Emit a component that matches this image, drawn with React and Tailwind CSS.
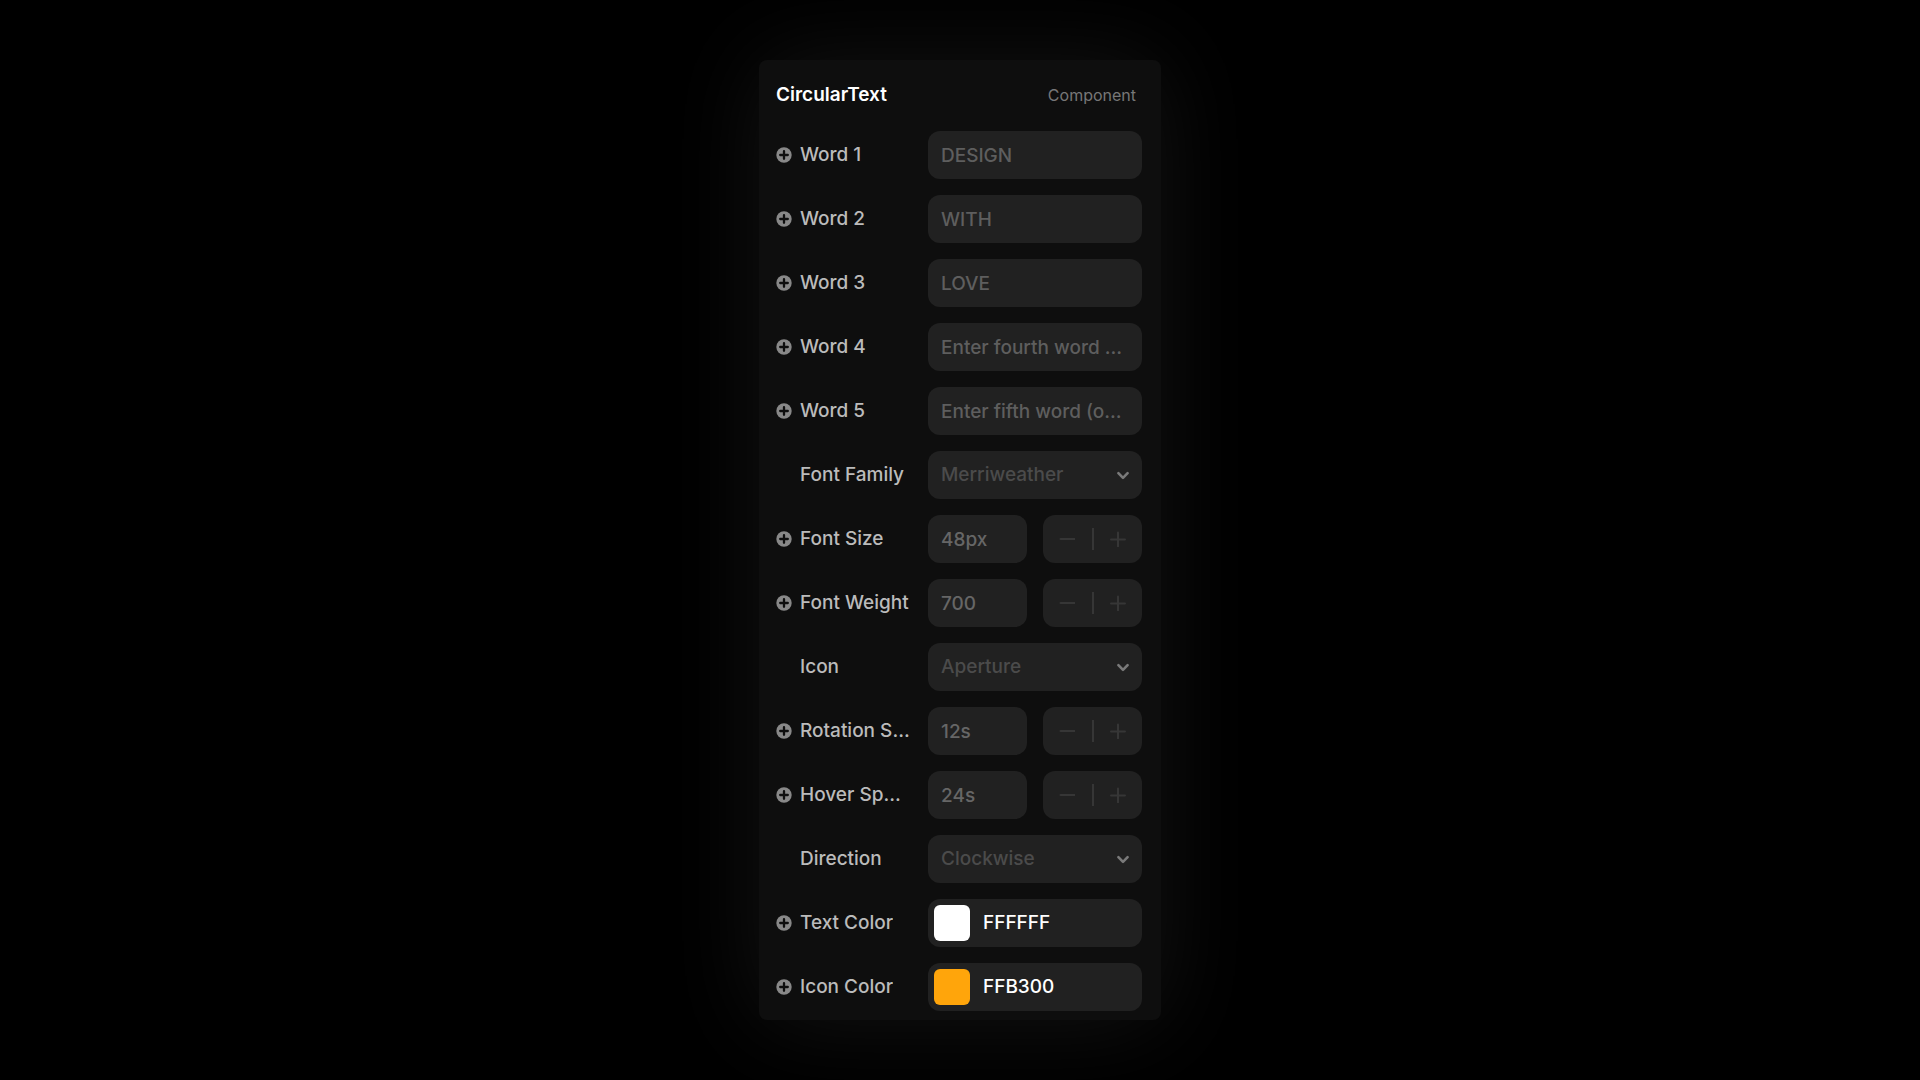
import React, { useState } from "react";

const fields = [
  { id: "word1", label: "Word 1", type: "text", placeholder: "DESIGN" },
  { id: "word2", label: "Word 2", type: "text", placeholder: "WITH" },
  { id: "word3", label: "Word 3", type: "text", placeholder: "LOVE" },
  { id: "word4", label: "Word 4", type: "text", placeholder: "Enter fourth word (optional)" },
  { id: "word5", label: "Word 5", type: "text", placeholder: "Enter fifth word (optional)" },
  { id: "fontFamily", label: "Font Family", type: "select", options: ["Merriweather", "Inter", "Roboto"] },
  { id: "fontSize", label: "Font Size", type: "number", value: 48, unit: "px" },
  { id: "fontWeight", label: "Font Weight", type: "number", value: 700, unit: "", step: 100 },
  { id: "icon", label: "Icon", type: "select", options: ["Aperture", "Star", "Heart"] },
  { id: "rotationSpeed", label: "Rotation Speed", type: "number", value: 12, unit: "s" },
  { id: "hoverSpeed", label: "Hover Speed", type: "number", value: 24, unit: "s" },
  { id: "direction", label: "Direction", type: "select", options: ["Clockwise", "Counterclockwise"] },
  { id: "textColor", label: "Text Color", type: "color", value: "FFFFFF", swatch: "bg-white" },
  { id: "iconColor", label: "Icon Color", type: "color", value: "FFB300", swatch: "bg-[#ffa50b]" },
];

function PlusBadge() {
  return (
    <svg viewBox="0 0 16 16" className="w-4 h-4" aria-hidden="true">
      <circle cx="8" cy="8" r="7.7" fill="#888888" />
      <path d="M8 4.2v7.6M4.2 8h7.6" stroke="#0e0e0e" strokeWidth="2.3" strokeLinecap="round" />
    </svg>
  );
}

function TextField({ field }) {
  return (
    <input
      id={field.id}
      type="text"
      placeholder={field.placeholder}
      className="w-full h-12 rounded-xl bg-[#212121] pl-[13px] pr-[18px] text-white placeholder:text-[#5e5e5e] text-ellipsis outline-none"
    />
  );
}

function SelectField({ field }) {
  return (
    <div className="relative w-full">
      <select
        id={field.id}
        className="appearance-none w-full h-12 rounded-xl bg-[#212121] pl-[13px] pr-10 text-[#4b4b4b] outline-none"
      >
        {field.options.map((option) => (
          <option key={option}>{option}</option>
        ))}
      </select>
      <svg
        viewBox="0 0 14 10"
        className="absolute right-3 top-5 w-[14px] h-[10px] pointer-events-none"
        fill="none"
        stroke="#7a7a7a"
        strokeWidth="2.6"
        strokeLinecap="round"
        strokeLinejoin="round"
      >
        <path d="M2.4 2.2 7 6.8l4.6-4.6" />
      </svg>
    </div>
  );
}

function NumberField({ field }) {
  const [value, setValue] = useState(field.value);
  const step = field.step || 1;

  return (
    <div className="grid grid-cols-2 gap-4 w-full">
      <input
        id={field.id}
        type="text"
        value={value + field.unit}
        onChange={(e) => setValue(parseInt(e.target.value) || 0)}
        className="w-full min-w-0 h-12 rounded-xl bg-[#212121] px-[13px] text-[#666666] outline-none"
      />
      <div className="flex items-center h-12 rounded-xl bg-[#212121] text-[#363636]">
        <button
          type="button"
          aria-label={"Decrease " + field.label}
          onClick={() => setValue(value - step)}
          className="flex-1 h-full flex items-center justify-center"
        >
          <svg viewBox="0 0 16 16" className="w-4 h-4" stroke="currentColor" strokeWidth="2" strokeLinecap="round">
            <path d="M1.5 8h14" />
          </svg>
        </button>
        <span className="w-[2px] h-[22px] bg-[#363636]" />
        <button
          type="button"
          aria-label={"Increase " + field.label}
          onClick={() => setValue(value + step)}
          className="flex-1 h-full flex items-center justify-center"
        >
          <svg viewBox="0 0 16 16" className="w-4 h-4" stroke="currentColor" strokeWidth="2" strokeLinecap="round">
            <path d="M1 8.5h14M8 1.5v14" />
          </svg>
        </button>
      </div>
    </div>
  );
}

function ColorField({ field }) {
  return (
    <div className="flex items-center gap-[13px] w-full h-12 rounded-xl bg-[#212121] px-[6px]">
      <button
        type="button"
        aria-label={"Pick " + field.label}
        className={"w-9 h-9 shrink-0 rounded-md " + field.swatch}
      />
      <input
        id={field.id}
        type="text"
        defaultValue={field.value}
        className="flex-1 min-w-0 bg-transparent text-white outline-none"
      />
    </div>
  );
}

function Control({ field }) {
  if (field.type === "select") return <SelectField field={field} />;
  if (field.type === "number") return <NumberField field={field} />;
  if (field.type === "color") return <ColorField field={field} />;
  return <TextField field={field} />;
}

function App() {
  return (
    <div className="min-h-screen bg-black flex items-center justify-center font-['Inter',sans-serif] text-[19px] leading-6 font-medium">
      <div className="w-full max-w-[402px] rounded-lg bg-[#0e0e0e] pl-[17px] pr-[19px] pb-[9px] shadow-[0_0_96px_rgba(255,255,255,0.08)]">
        <div className="flex items-center justify-between h-[71px] pb-[2px] pr-[6px]">
          <h1 className="font-semibold text-white">CircularText</h1>
          <span className="text-base font-normal text-[#777777]">Component</span>
        </div>

        <form className="flex flex-col gap-4">
          {fields.map((field) => (
            <div key={field.id} className="flex items-center">
              <div className="flex items-center gap-2 flex-1 min-w-0 pr-[17px]">
                <div className="w-4 shrink-0">
                  {field.type !== "select" && <PlusBadge />}
                </div>
                <label htmlFor={field.id} className="truncate text-[#bbbbbb]">
                  {field.label}
                </label>
              </div>
              <div className="w-[214px] shrink-0">
                <Control field={field} />
              </div>
            </div>
          ))}
        </form>
      </div>
    </div>
  );
}

export default App;
